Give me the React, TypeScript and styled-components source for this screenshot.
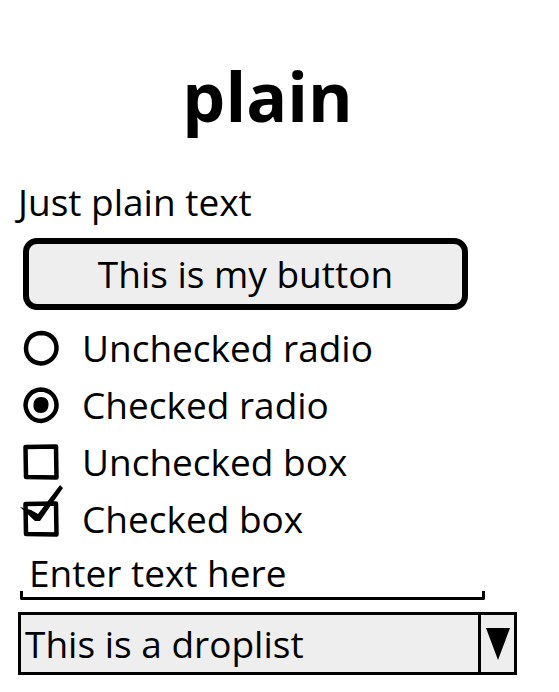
import React from 'react';
import styled, { createGlobalStyle } from 'styled-components';

const Global = createGlobalStyle`
  html, body { margin: 0; padding: 0; background: #fff; }
  body { font-family: "Open Sans", "Noto Sans", sans-serif; color: #000; }
`;

const Page = styled.div`
  width: 559px;
  height: 692px;
  box-sizing: border-box;
  padding: 49px 0 0 18px;
  display: flex;
  flex-direction: column;
  overflow: hidden;
`;

const Title = styled.h1`
  margin: 0;
  width: 499px;
  text-align: center;
  font-size: 68px;
  font-weight: 700;
  line-height: 93px;
`;

const Plain = styled.div`
  margin-top: 34px;
  font-size: 37px;
  line-height: 52px;
  white-space: nowrap;
`;

const Button = styled.div`
  margin: 10px 0 0 5px;
  width: 445px;
  height: 72px;
  box-sizing: border-box;
  border: 6px solid #000;
  border-radius: 14px;
  background: #eeeeee;
  display: flex;
  align-items: center;
  justify-content: center;
  font-size: 37px;
  line-height: 52px;
`;

const Options = styled.div`
  margin-top: 9px;
  display: flex;
  flex-direction: column;
`;

const Option = styled.div`
  height: 57px;
  display: flex;
  align-items: center;
  gap: 23px;
  padding-left: 5px;
  font-size: 37px;
  line-height: 52px;
  white-space: nowrap;
`;

const Icon = styled.svg`
  width: 36px;
  height: 36px;
  flex: none;
  overflow: visible;
`;

const Field = styled.div`
  width: 465px;
  margin-left: 2px;
  display: flex;
  flex-direction: column;
`;

const FieldText = styled.div`
  padding-left: 9px;
  font-size: 37px;
  line-height: 52px;
  white-space: nowrap;
`;

const Underline = styled.div`
  height: 9px;
  margin-top: -8px;
  box-sizing: border-box;
  border: 3px solid #000;
  border-top: none;
  border-radius: 0 0 2px 2px;
`;

const Drop = styled.div`
  margin-top: 12px;
  width: 499px;
  height: 63px;
  box-sizing: border-box;
  border: 3px solid #000;
  background: #eeeeee;
  display: flex;
`;

const DropText = styled.div`
  flex: 1;
  padding-left: 4px;
  font-size: 37px;
  line-height: 57px;
  white-space: nowrap;
`;

const DropArrow = styled.div`
  width: 33px;
  border-left: 3px solid #000;
  display: flex;
  align-items: center;
  justify-content: center;
`;

const RadioOff = () => (
  <Icon viewBox="0 0 36 36">
    <path
      d="M18 3 C27 3 33 9 33.5 17 C34 26 27 33 18 33.5 C9 33 3 27 3 18 C3.5 9 9 3.5 18 3 Z"
      fill="none"
      stroke="#000"
      strokeWidth="4.5"
    />
  </Icon>
);

const RadioOn = () => (
  <Icon viewBox="0 0 36 36">
    <path
      d="M18 2.5 C27 3 33 9 33.5 17.5 C34 26 27 33 18 34 C9 33.5 3 27 2.5 18 C3 9 9 3 18 2.5 Z"
      fill="none"
      stroke="#000"
      strokeWidth="4.5"
    />
    <path d="M18 10 C23 10 26 13 25.5 18 C25.5 23 22 26 18 26 C13 26 10 22.5 10.5 18 C10.5 13 13.5 10 18 10 Z" fill="#000" />
  </Icon>
);

const BoxOff = () => (
  <Icon viewBox="0 0 36 36">
    <path d="M2.5 3 L33 2.5 L33.5 33.5 L3 33 Z" fill="none" stroke="#000" strokeWidth="4.5" strokeLinejoin="round" />
  </Icon>
);

const BoxOn = () => (
  <Icon viewBox="0 0 36 36">
    <path d="M2.5 3 L33 2.5 L33.5 33.5 L3 33 Z" fill="none" stroke="#000" strokeWidth="4.5" strokeLinejoin="round" />
    <path d="M-3 6 L8 9 L15 13 L37 -16 L40 -13 L17 20 L12 20 Z" fill="#000" />
  </Icon>
);

const Triangle = () => (
  <svg width="26" height="34" viewBox="0 0 26 34">
    <path d="M1 1 L25 1 L13 33 Z" fill="#000" />
  </svg>
);

export default function App() {
  return (
    <>
      <Global />
      <Page>
        <Title>plain</Title>
        <Plain>Just plain text</Plain>
        <Button>This is my button</Button>
        <Options>
          <Option>
            <RadioOff />
            <span>Unchecked radio</span>
          </Option>
          <Option>
            <RadioOn />
            <span>Checked radio</span>
          </Option>
          <Option>
            <BoxOff />
            <span>Unchecked box</span>
          </Option>
          <Option>
            <BoxOn />
            <span>Checked box</span>
          </Option>
        </Options>
        <Field>
          <FieldText>Enter text here</FieldText>
          <Underline />
        </Field>
        <Drop>
          <DropText>This is a droplist</DropText>
          <DropArrow>
            <Triangle />
          </DropArrow>
        </Drop>
      </Page>
    </>
  );
}
